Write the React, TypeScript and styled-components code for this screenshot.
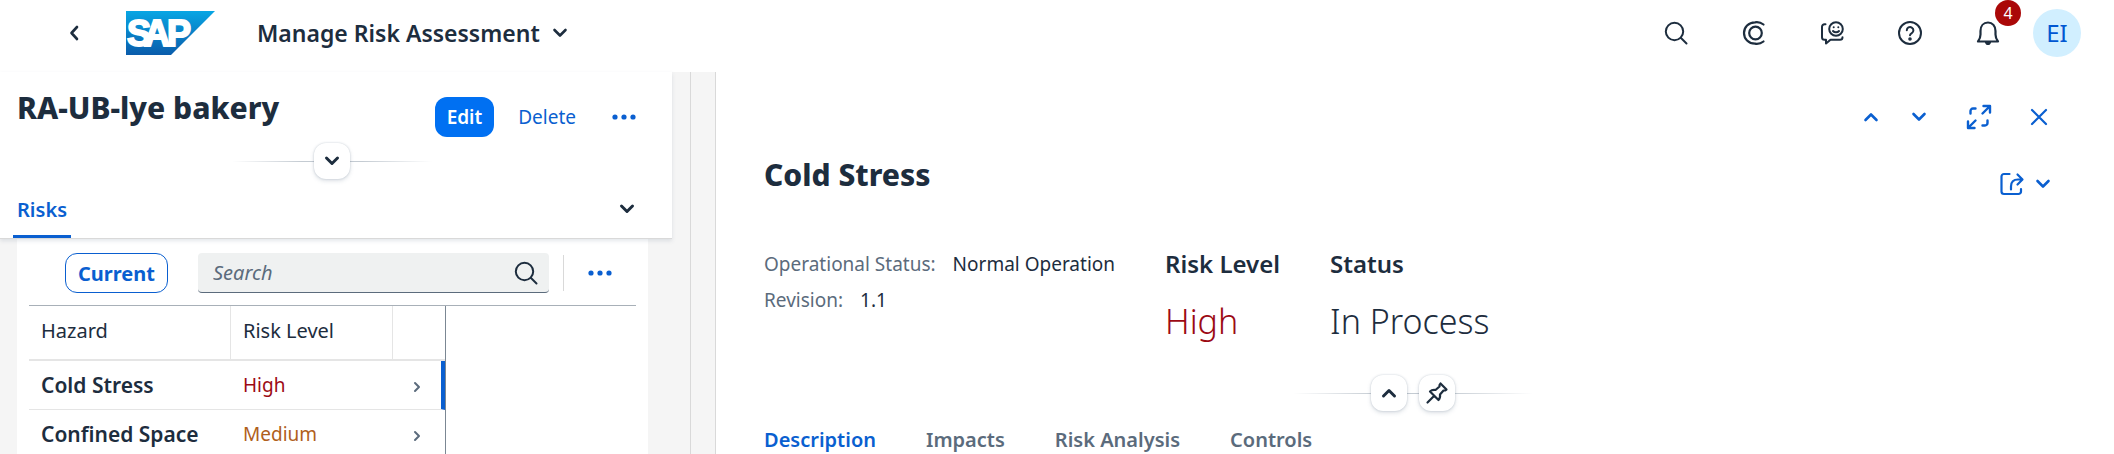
import React from "react";
import styled, { createGlobalStyle, css } from "styled-components";

const color = {
  text: "#1d2d3e",
  label: "#5b6b7c",
  blue: "#0a5fd0",
  brand: "#0070f2",
  line: "#d9d9d9",
  soft: "#e5e5e5",
  ground: "#f5f5f5",
  badge: "#aa0808",
  high: "#9c0a14",
  medium: "#b0601c",
};

const GlobalStyle = createGlobalStyle`
  * { box-sizing: border-box; }
  body {
    margin: 0;
    background: #fff;
    color: ${color.text};
    font-family: "Noto Sans", "Open Sans", sans-serif;
    font-size: 19px;
  }
  button, input { font: inherit; color: inherit; }
  h1, h2, h3, dl, dd, p { margin: 0; }
`;

const Page = styled.div`
  height: 100vh;
  display: flex;
  flex-direction: column;
  overflow: hidden;
`;

const PlainButton = styled.button`
  display: inline-flex;
  align-items: center;
  justify-content: center;
  padding: 0;
  border: 0;
  background: none;
  cursor: pointer;
`;

/* Shell bar */

const ShellBar = styled.header`
  flex: none;
  height: 72px;
  padding: 0 33px 6px 50px;
  display: flex;
  align-items: center;
`;

const IconButton = styled(PlainButton)<{ $accent?: boolean }>`
  position: relative;
  width: 48px;
  height: 40px;
  color: ${(p) => (p.$accent ? color.blue : color.text)};
`;

const LogoLink = styled.a`
  display: flex;
  margin-left: 28px;
`;

const AppTitle = styled(PlainButton)`
  margin-left: 42px;
  gap: 13px;
  font-size: 23px;
  font-weight: 600;
  line-height: 32px;
  white-space: nowrap;
`;

const ShellActions = styled.div`
  margin-left: auto;
  display: flex;
  align-items: center;
  gap: 30px;
`;

const Badge = styled.span`
  position: absolute;
  top: -13px;
  right: -9px;
  width: 26px;
  height: 26px;
  border-radius: 50%;
  background: ${color.badge};
  color: #fff;
  font-size: 16px;
  line-height: 26px;
  text-align: center;
`;

const Avatar = styled(PlainButton)`
  width: 48px;
  height: 48px;
  margin-left: -9px;
  border-radius: 50%;
  background: #d1efff;
  color: #0057d2;
  font-size: 24px;
  line-height: 32px;
`;

/* Columns */

const Columns = styled.main`
  flex: 1;
  min-height: 0;
  display: grid;
  grid-template-columns: minmax(0, 690fr) 26px minmax(0, 1398fr);
`;

const Splitter = styled.div`
  border: solid ${color.line};
  border-width: 0 1px;
  background: ${color.ground};
`;

const ListColumn = styled.section`
  display: flex;
  flex-direction: column;
  padding-right: 18px;
  background: ${color.ground};
`;

const ListHeader = styled.div`
  position: relative;
  padding-top: 16px;
  background: #fff;
  border-bottom: 1px solid ${color.line};
  box-shadow: 0 2px 4px rgba(85, 107, 130, 0.16);
`;

const TitleRow = styled.div`
  display: flex;
  align-items: flex-start;
  justify-content: space-between;
  padding: 0 24px 0 17px;
`;

const Title = styled.h1`
  font-size: 30px;
  font-weight: 800;
  line-height: 40px;
  white-space: nowrap;
`;

const TitleActions = styled.div`
  display: flex;
  align-items: center;
  padding-top: 9px;
`;

const EditButton = styled(PlainButton)`
  height: 40px;
  padding: 0 12px;
  border-radius: 12px;
  background: ${color.brand};
  color: #fff;
  font-weight: 600;
`;

const LinkButton = styled(PlainButton)`
  height: 40px;
  margin: 0 24px;
  color: ${color.blue};
`;

const Pills = styled.div<{ $width: number }>`
  display: flex;
  align-items: center;
  justify-content: center;
  gap: 12px;
  width: ${(p) => p.$width}px;
  height: 36px;
  margin: 0 auto;
  background: linear-gradient(90deg, transparent, #c4cbd2 35%, #c4cbd2 65%, transparent) center / 100% 1px no-repeat;
`;

const PillBand = styled.div<{ $top: number; $right: number }>`
  padding: ${(p) => p.$top}px ${(p) => p.$right}px 0 0;
`;

const Pill = styled(PlainButton)`
  width: 36px;
  height: 36px;
  border-radius: 12px;
  background: #fff;
  box-shadow: 0 0 2px rgba(85, 107, 130, 0.3), 0 2px 4px rgba(85, 107, 130, 0.2);
`;

const ListTabs = styled.nav`
  height: 59px;
  padding: 0 21px 0 13px;
  display: flex;
  align-items: center;
  justify-content: space-between;
`;

const tabText = css`
  font-size: 20px;
  text-decoration: none;
  white-space: nowrap;
`;

const ListTab = styled.a`
  ${tabText}
  height: 59px;
  padding: 4px 4px 0;
  border-bottom: 3px solid ${color.blue};
  color: ${color.blue};
  font-weight: 600;
  line-height: 54px;
`;

const Card = styled.div`
  flex: 1;
  margin: 0 24px 0 17px;
  padding: 14px 12px 0;
  background: #fff;
`;

const Toolbar = styled.div`
  display: flex;
  align-items: center;
  height: 40px;
  padding-left: 36px;
  margin-bottom: 12px;
`;

const Toggle = styled(PlainButton)`
  height: 40px;
  padding: 0 12px;
  border: 1px solid ${color.blue};
  border-radius: 12px;
  color: ${color.blue};
  font-size: 20px;
  font-weight: 700;
`;

const SearchField = styled.label`
  flex: 1;
  min-width: 0;
  height: 40px;
  margin: 0 14px 0 30px;
  padding: 0 11px 0 15px;
  display: flex;
  align-items: center;
  border-bottom: 1px solid ${color.label};
  border-radius: 4px;
  background: #eff1f1;
`;

const SearchInput = styled.input`
  flex: 1;
  min-width: 0;
  padding: 0;
  border: 0;
  outline: 0;
  background: none;
  font-size: 20px;
  &::placeholder {
    color: ${color.label};
    font-style: italic;
    opacity: 1;
  }
`;

const ToolbarEnd = styled.div`
  height: 36px;
  padding: 0 12px;
  display: flex;
  align-items: center;
  border-left: 1px solid ${color.line};
`;

const TableFrame = styled.div`
  border-top: 1px solid #a8b0b8;
`;

const HazardTable = styled.table`
  width: 417px;
  max-width: 100%;
  table-layout: fixed;
  border-collapse: separate;
  border-spacing: 0;
  border-right: 1px solid #7b8793;
  text-align: left;
`;

const HeadCell = styled.th<{ $width?: number }>`
  width: ${(p) => (p.$width ? `${p.$width}px` : "auto")};
  height: 55px;
  padding: 0 12px 4px;
  border-bottom: 2px solid ${color.soft};
  font-size: 20px;
  font-weight: 400;
  &:not(:last-child) {
    border-right: 1px solid ${color.soft};
  }
`;

const Cell = styled.td<{ $tone?: string }>`
  height: 49px;
  padding: 0 13px 0 12px;
  border-bottom: 1px solid ${color.soft};
  color: ${(p) => p.$tone ?? "inherit"};
`;

const NameCell = styled.th`
  padding: 0 12px;
  border-bottom: 1px solid ${color.soft};
  font-size: 21px;
  font-weight: 600;
  white-space: nowrap;
`;

const NavCell = styled(Cell)<{ $selected?: boolean }>`
  text-align: right;
  padding: 0 ${(p) => (p.$selected ? 21 : 25)}px 0 0;
  border-right: ${(p) => (p.$selected ? `4px solid ${color.blue}` : "0")};
`;

/* Detail column */

const Detail = styled.section`
  padding: 25px 0 0 48px;
`;

const DetailNav = styled.div`
  display: flex;
  justify-content: flex-end;
  gap: 12px;
  padding-right: 51px;
`;

const Paging = styled.div`
  display: flex;
`;

const DetailTitleRow = styled.div`
  display: flex;
  align-items: flex-start;
  justify-content: space-between;
  padding: 18px 64px 0 0;
`;

const ShareButton = styled(PlainButton)`
  height: 40px;
  margin-top: 9px;
  gap: 12px;
  color: ${color.blue};
`;

const Facets = styled.div`
  display: flex;
  align-items: flex-start;
  gap: 50px;
  padding-top: 42px;
  white-space: nowrap;
`;

const Properties = styled.dl`
  line-height: 36px;
`;

const Property = styled.div`
  display: flex;
  gap: 17px;
`;

const Term = styled.dt`
  color: ${color.label};
`;

const FacetTitle = styled.h2`
  font-size: 24px;
  font-weight: 600;
  line-height: 36px;
`;

const FacetValue = styled.p<{ $tone?: string }>`
  padding-top: 16px;
  font-size: 34px;
  font-weight: 300;
  line-height: 46px;
  color: ${(p) => p.$tone ?? "inherit"};
`;

const DetailTabs = styled.nav`
  display: flex;
  gap: 50px;
  padding-top: 5px;
`;

const DetailTab = styled.a<{ $active?: boolean }>`
  ${tabText}
  height: 48px;
  font-weight: 600;
  line-height: 48px;
  color: ${(p) => (p.$active ? color.blue : color.label)};
`;

/* Icons */

const Icon = styled.svg<{ $weight?: number }>`
  flex: none;
  display: block;
  fill: none;
  stroke: currentColor;
  stroke-width: ${(p) => p.$weight ?? 2};
  stroke-linecap: round;
  stroke-linejoin: round;
  overflow: visible;
`;

type ChevronProps = { to: "up" | "down" | "left" | "right"; weight?: number };

const chevrons = {
  up: { w: 14, h: 8, d: "M1.5 7 7 1.500l5.500 5.500" },
  down: { w: 14, h: 8, d: "M1.5 1 7 6.500 12.500 1" },
  left: { w: 8, h: 14, d: "M7 1 1.500 7 7 13" },
  right: { w: 6, h: 10, d: "M1 1l4 4-4 4" },
};

const Chevron = ({ to, weight = 2.6 }: ChevronProps) => {
  const c = chevrons[to];
  return (
    <Icon width={c.w} height={c.h} viewBox={`0 0 ${c.w} ${c.h}`} $weight={weight} aria-hidden>
      <path d={c.d} />
    </Icon>
  );
};

const Magnifier = () => (
  <Icon width="24" height="24" viewBox="0 0 24 24" aria-hidden>
    <circle cx="10.5" cy="10.5" r="8.7" />
    <path d="M17 17l5.5 5.5" />
  </Icon>
);

const Assistant = () => (
  <Icon width="24" height="24" viewBox="0 0 24 24" $weight={2.2} aria-hidden>
    <circle cx="13.500" cy="12" r="6.300" />
    <path d="M21.500 3.500A11 11 0 0 0 13 1.300C6.500 1.300 2 6.200 2 12s4.500 10.700 11 10.700A11 11 0 0 0 21.500 20.500" />
  </Icon>
);

const Feedback = () => (
  <Icon width="24" height="24" viewBox="0 0 24 24" aria-hidden>
    <circle cx="16" cy="8" r="6.800" />
    <path d="M13 10c1.500 1.800 4.500 1.800 6 0M13.700 6.200v.1M18.300 6.200v.1" />
    <path d="M5.500 3.200H4.500A2.500 2.500 0 0 0 2 5.700v10.500a2.500 2.500 0 0 0 2.500 2.500H6v3.800l4.500-3.800h9.500a2.500 2.500 0 0 0 2.500-2.500" />
  </Icon>
);

const Help = () => (
  <Icon width="26" height="26" viewBox="0 0 26 26" aria-hidden>
    <circle cx="13" cy="13" r="11" />
    <path d="M9.800 10.300a3.300 3.300 0 1 1 5 2.900c-1.200.7-1.800 1.200-1.800 2.100" />
    <circle cx="13" cy="19" r=".8" />
  </Icon>
);

const Bell = () => (
  <Icon width="24" height="26" viewBox="0 0 24 26" $weight={2.2} aria-hidden>
    <path d="M2 21.500h20c-1.500-2-2.500-4-2.500-7V11c0-5-3-8.500-7.500-8.500S4.500 6 4.500 11v3.500c0 3-1 5-2.500 7z" />
    <path d="M10 22.500h4l-1 1.500h-2z" />
  </Icon>
);

const FullScreen = () => (
  <Icon width="26" height="26" viewBox="0 0 26 26" $weight={2.4} aria-hidden>
    <path d="M16.500 9.500 24 2M17.500 2H24v6.500M9.500 16.500 2 24M2 17.500V24h6.500" />
    <path d="M4.500 9.500V7A2.500 2.500 0 0 1 7 4.500h2.500M21.500 16.500V19a2.500 2.500 0 0 1-2.500 2.500h-2.500" />
  </Icon>
);

const Close = () => (
  <Icon width="16" height="16" viewBox="0 0 16 16" $weight={2.2} aria-hidden>
    <path d="M1 1l14 14M15 1 1 15" />
  </Icon>
);

const Share = () => (
  <Icon width="24" height="24" viewBox="0 0 24 24" $weight={2.2} aria-hidden>
    <path d="M9.500 2H4A2.500 2.500 0 0 0 1.500 4.500v15A2.500 2.500 0 0 0 4 22h14.500a2.500 2.500 0 0 0 2.500-2.500V17" />
    <path d="M11 17.500v-3c0-4.500 2.500-7 7-7h4M17.500 2.500l5 5-5 5" />
  </Icon>
);

const PushPin = () => (
  <Icon width="22" height="22" viewBox="0 0 22 22" $weight={2.2} aria-hidden>
    <path d="M14.500 1.500l6 6-1.500 1h-1.500l-3.500 4c.3 2 0 4-1.500 5.500L4 9.500C5.500 8 7.500 7.700 9.500 8l4-3.500V3zM8 14l-6.500 6.500" />
  </Icon>
);

const Dots = () => (
  <Icon width="24" height="6" viewBox="0 0 24 6" aria-hidden>
    <g fill="currentColor" stroke="none">
      <circle cx="3" cy="3" r="2.600" />
      <circle cx="12" cy="3" r="2.600" />
      <circle cx="21" cy="3" r="2.600" />
    </g>
  </Icon>
);

const Logo = () => (
  <svg width="89" height="44" viewBox="0 0 89 44" role="img" aria-label="SAP">
    <defs>
      <linearGradient id="sap" x1="0" y1="0" x2="0" y2="1">
        <stop offset="0" stopColor="#08a6e4" />
        <stop offset="1" stopColor="#0a5cab" />
      </linearGradient>
    </defs>
    <path d="M0 0h89L45 44H0z" fill="url(#sap)" />
    <text x="1 18 41" y="35" fill="#fff" fontFamily="Liberation Sans, sans-serif" fontWeight="700" fontSize="36" stroke="#fff" strokeWidth="2">
      SAP
    </text>
  </svg>
);

const hazards = [
  { name: "Cold Stress", level: "High", tone: color.high, selected: true },
  { name: "Confined Space", level: "Medium", tone: color.medium, selected: false },
];

const tabs = ["Description", "Impacts", "Risk Analysis", "Controls"];

export default function App() {
  return (
    <Page>
      <GlobalStyle />
      <ShellBar>
        <IconButton aria-label="Back">
          <Chevron to="left" />
        </IconButton>
        <LogoLink href="#home">
          <Logo />
        </LogoLink>
        <AppTitle>
          Manage Risk Assessment
          <Chevron to="down" />
        </AppTitle>
        <ShellActions>
          <IconButton aria-label="Search"><Magnifier /></IconButton>
          <IconButton aria-label="Assistant"><Assistant /></IconButton>
          <IconButton aria-label="Feedback"><Feedback /></IconButton>
          <IconButton aria-label="Help"><Help /></IconButton>
          <IconButton aria-label="Notifications">
            <Bell />
            <Badge>4</Badge>
          </IconButton>
          <Avatar aria-label="Profile">EI</Avatar>
        </ShellActions>
      </ShellBar>

      <Columns>
        <ListColumn>
          <ListHeader>
            <TitleRow>
              <Title>RA-UB-lye bakery</Title>
              <TitleActions>
                <EditButton>Edit</EditButton>
                <LinkButton>Delete</LinkButton>
                <IconButton $accent aria-label="More actions"><Dots /></IconButton>
              </TitleActions>
            </TitleRow>
            <PillBand $top={6} $right={8}>
              <Pills $width={200}>
                <Pill aria-label="Expand header"><Chevron to="down" weight={3} /></Pill>
              </Pills>
            </PillBand>
            <ListTabs>
              <ListTab href="#risks">Risks</ListTab>
              <IconButton aria-label="More sections"><Chevron to="down" weight={3} /></IconButton>
            </ListTabs>
          </ListHeader>
          <Card>
            <Toolbar>
              <Toggle>Current</Toggle>
              <SearchField>
                <SearchInput type="text" placeholder="Search" aria-label="Search" />
                <Magnifier />
              </SearchField>
              <ToolbarEnd>
                <IconButton $accent aria-label="More"><Dots /></IconButton>
              </ToolbarEnd>
            </Toolbar>
            <TableFrame>
              <HazardTable>
                <thead>
                  <tr>
                    <HeadCell $width={202}>Hazard</HeadCell>
                    <HeadCell $width={162}>Risk Level</HeadCell>
                    <HeadCell aria-label="Navigation" />
                  </tr>
                </thead>
                <tbody>
                  {hazards.map((h) => (
                    <tr key={h.name}>
                      <NameCell scope="row">{h.name}</NameCell>
                      <Cell $tone={h.tone}>{h.level}</Cell>
                      <NavCell $tone={color.label} $selected={h.selected}>
                        <PlainButton aria-label={`Open ${h.name}`}><Chevron to="right" weight={2} /></PlainButton>
                      </NavCell>
                    </tr>
                  ))}
                </tbody>
              </HazardTable>
            </TableFrame>
          </Card>
        </ListColumn>

        <Splitter />

        <Detail>
          <DetailNav>
            <Paging>
              <IconButton $accent aria-label="Previous"><Chevron to="up" /></IconButton>
              <IconButton $accent aria-label="Next"><Chevron to="down" /></IconButton>
            </Paging>
            <IconButton $accent aria-label="Full screen"><FullScreen /></IconButton>
            <IconButton $accent aria-label="Close"><Close /></IconButton>
          </DetailNav>
          <DetailTitleRow>
            <Title as="h2">Cold Stress</Title>
            <ShareButton aria-label="Share">
              <Share />
              <Chevron to="down" />
            </ShareButton>
          </DetailTitleRow>
          <Facets>
            <Properties>
              <Property><Term>Operational Status:</Term><dd>Normal Operation</dd></Property>
              <Property><Term>Revision:</Term><dd>1.1</dd></Property>
            </Properties>
            <div>
              <FacetTitle>Risk Level</FacetTitle>
              <FacetValue $tone={color.high}>High</FacetValue>
            </div>
            <div>
              <FacetTitle>Status</FacetTitle>
              <FacetValue>In Process</FacetValue>
            </div>
          </Facets>
          <PillBand $top={31} $right={52}>
            <Pills $width={240}>
              <Pill aria-label="Collapse header"><Chevron to="up" weight={3} /></Pill>
              <Pill aria-label="Pin header"><PushPin /></Pill>
            </Pills>
          </PillBand>
          <DetailTabs>
            {tabs.map((t, i) => (
              <DetailTab key={t} href="#section" $active={i === 0}>{t}</DetailTab>
            ))}
          </DetailTabs>
        </Detail>
      </Columns>
    </Page>
  );
}
